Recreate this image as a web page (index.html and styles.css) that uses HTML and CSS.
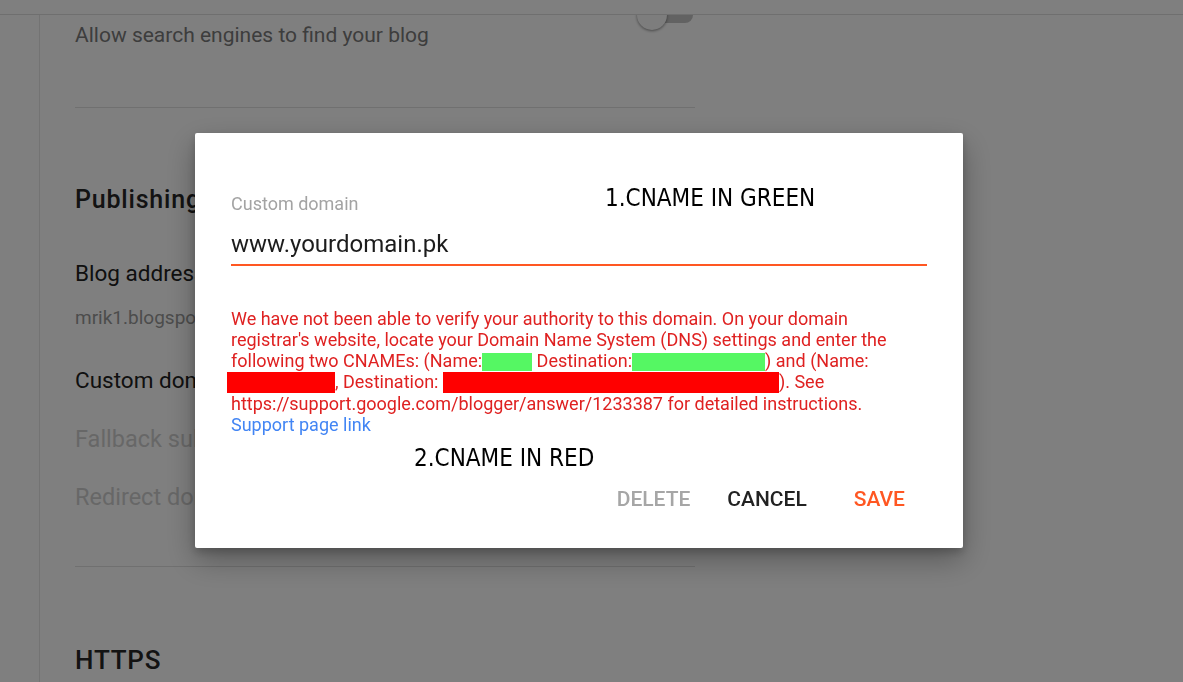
FILE: index.html
```html
<!DOCTYPE html>
<html lang="en">
<head>
<meta charset="utf-8">
<title>Settings - Custom domain</title>
<link rel="stylesheet" href="styles.css">
</head>
<body>
<div class="page">
  <header class="topbar"></header>
  <div class="main">
    <aside class="sidebar"></aside>
    <section class="content">
      <div class="setting-top">
        <p class="desc">Allow search engines to find your blog</p>
        <div class="toggle"><span class="track"></span><span class="knob"></span></div>
      </div>
      <hr class="divider first">
      <h2 class="section-title">Publishing</h2>
      <p class="item-title gap-a">Blog address</p>
      <p class="item-sub">mrik1.blogspot.com</p>
      <p class="item-title gap-b">Custom domain</p>
      <p class="item-disabled gap-c">Fallback subdomain</p>
      <p class="item-disabled gap-d">Redirect domain</p>
      <hr class="divider second">
      <h2 class="section-title https">HTTPS</h2>
    </section>
  </div>
</div>

<div class="overlay">
  <div class="dialog" role="dialog">
    <span class="note note-green">1.CNAME IN GREEN</span>
    <label class="field-label" for="domain">Custom domain</label>
    <div class="field-input" id="domain">www.yourdomain.pk</div>
    <p class="error">We have not been able to verify your authority to this domain. On your domain registrar's website, locate your Domain Name System (DNS) settings and enter the following two CNAMEs: (Name:<span class="mask green g1"></span> Destination:<span class="mask green g2"></span>) and (Name: <span class="mask red r1"></span>, Destination: <span class="mask red r2"></span>). See https://support.google.com/blogger/answer/1233387 for detailed instructions.<br><a class="link" href="#">Support page link</a></p>
    <span class="note note-red">2.CNAME IN RED</span>
    <div class="actions">
      <button class="btn btn-delete" type="button">Delete</button>
      <button class="btn btn-cancel" type="button">Cancel</button>
      <button class="btn btn-save" type="button">Save</button>
    </div>
  </div>
</div>
</body>
</html>
```

FILE: styles.css
```css
* { box-sizing: border-box; }

html, body {
  margin: 0;
  padding: 0;
  height: 100%;
  overflow: hidden;
}

body {
  font-family: Roboto, "Liberation Sans", Arial, sans-serif;
  background: #ffffff;
  color: #212121;
}

.page {
  height: 682px;
  display: flex;
  flex-direction: column;
}

.topbar {
  height: 15px;
  flex: none;
  background: #ffffff;
  border-bottom: 1px solid #dedede;
}

.main {
  flex: 1;
  display: flex;
  overflow: hidden;
}

.sidebar {
  width: 40px;
  flex: none;
  border-right: 1px solid #e6e6e6;
}

.content {
  width: 655px;
  padding-left: 35px;
}

.content p, .content h2 { margin: 0; white-space: nowrap; }

.setting-top {
  display: flex;
  justify-content: space-between;
  align-items: flex-start;
}

.desc {
  margin-top: 8px !important;
  font-size: 21px;
  line-height: 24px;
  color: #7a7a7a;
}

.toggle {
  width: 56px;
  height: 30px;
  margin-top: -15px;
  margin-right: 2px;
  display: flex;
  align-items: center;
}

.track {
  width: 44px;
  height: 16px;
  margin-left: 12px;
  border-radius: 8px;
  background: #c4c4c4;
}

.knob {
  width: 30px;
  height: 30px;
  margin-left: -56px;
  border-radius: 50%;
  background: #fafafa;
  box-shadow: 0 1px 3px rgba(0,0,0,0.45);
}

.divider {
  border: 0;
  border-top: 1px solid #e0e0e0;
  margin: 0;
}

.divider.first { margin-top: 60px; }
.divider.second { margin-top: 56px; }

.section-title {
  margin-top: 76px !important;
  font-size: 25px;
  line-height: 32px;
  font-weight: 500;
  color: #262626;
  letter-spacing: 0.8px;
}

.section-title.https { margin-top: 77px !important; font-size: 26px; }

.item-title {
  font-size: 22.5px;
  line-height: 24px;
  color: #212121;
}

.item-sub {
  margin-top: 21px !important;
  font-size: 19px;
  line-height: 24px;
  color: #999999;
}

.item-disabled {
  font-size: 23.5px;
  line-height: 26px;
  color: #cfcfcf;
}

.gap-a { margin-top: 45px !important; }
.gap-b { margin-top: 38px !important; }
.gap-c { margin-top: 34px !important; }
.gap-d { margin-top: 32px !important; }

/* modal */
.overlay {
  position: fixed;
  inset: 0;
  background: rgba(0,0,0,0.5);
  display: flex;
  align-items: flex-start;
}

.dialog {
  position: relative;
  margin-left: 195px;
  margin-top: 133px;
  width: 768px;
  height: 415px;
  padding: 61px 36px 0 36px;
  background: #ffffff;
  border-radius: 2px;
  box-shadow: 0 12px 30px rgba(0,0,0,0.3), 0 4px 10px rgba(0,0,0,0.2);
  display: flex;
  flex-direction: column;
}

.field-label {
  font-size: 18px;
  line-height: 20px;
  color: #a3a3a3;
}

.field-input {
  margin-top: 16px;
  padding-bottom: 6px;
  font-size: 24px;
  line-height: 28px;
  color: #1c1c1c;
  border-bottom: 2px solid #ff5722;
}

.error {
  margin: 42px 0 0 0;
  font-size: 18px;
  line-height: 21px;
  color: #df2121;
}

.mask { display: inline-block; }

.green { background: #55f763; height: 18px; vertical-align: -4px; }
.g1 { width: 50px; }
.g2 { width: 133px; }

.red { background: #ff0000; height: 21px; vertical-align: -5px; }
.r1 { width: 108px; margin-left: -4px; }
.r2 { width: 336px; }

.link {
  color: #4285f4;
  text-decoration: none;
}

.note {
  position: absolute;
  font-family: "DejaVu Sans Condensed", "DejaVu Sans", sans-serif;
  font-stretch: condensed;
  font-size: 24px;
  line-height: 24px;
  color: #000000;
  white-space: nowrap;
}

.note-green { left: 410px; top: 53px; }
.note-red { left: 219px; top: 313px; }

.actions {
  margin-top: 46px;
  display: flex;
  justify-content: flex-end;
  margin-right: 6px;
}

.btn {
  border: 0;
  background: transparent;
  font-family: Roboto, "Liberation Sans", Arial, sans-serif;
  font-size: 21px;
  font-weight: 500;
  line-height: 36px;
  height: 36px;
  text-transform: uppercase;
  padding: 0 16px;
  cursor: pointer;
}

.btn-delete { color: #a6a6a6; }
.btn-cancel { color: #222222; margin-left: 5px; }
.btn-save { color: #ff5722; margin-left: 15px; }
```
